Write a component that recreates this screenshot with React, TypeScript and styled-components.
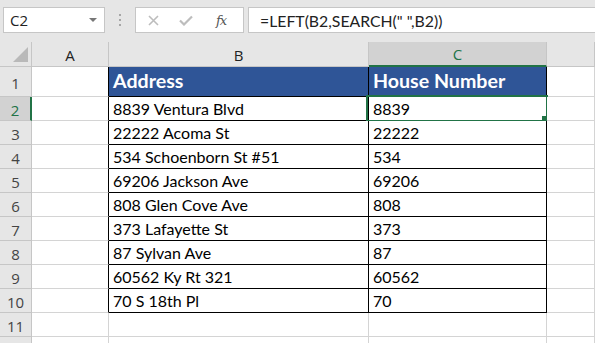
import styled, { createGlobalStyle } from "styled-components";

const GREEN = "#217346";
const GRID = "#d4d4d4";
const HEAD_LINE = "#c6c6c6";

const COLS = ["A", "B", "C", ""];
const COL_WIDTHS = "32px 77px 260px 178px 1fr";
const ROW_HEIGHTS = [30, 24, 24, 24, 24, 24, 24, 24, 24, 24, 24, 24];

const ROWS: [string, string][] = [
    ["Address", "House Number"],
    ["8839 Ventura Blvd", "8839"],
    ["22222 Acoma St", "22222"],
    ["534 Schoenborn St #51", "534"],
    ["69206 Jackson Ave", "69206"],
    ["808 Glen Cove Ave", "808"],
    ["373 Lafayette St", "373"],
    ["87 Sylvan Ave", "87"],
    ["60562 Ky Rt 321", "60562"],
    ["70 S 18th Pl", "70"],
    ["", ""],
    ["", ""],
];

const GlobalStyle = createGlobalStyle`
    html, body {
        margin: 0;
        padding: 0;
        background: #ffffff;
    }
`;

const Window = styled.div`
    width: 595px;
    height: 343px;
    overflow: hidden;
    background: #ffffff;
    font-family: "Open Sans", "Noto Sans", sans-serif;
`;

const Toolbar = styled.div`
    height: 42px;
    background: #e6e6e6;
    display: flex;
    align-items: flex-start;
    padding-top: 7px;
    box-sizing: border-box;
`;

const NameBox = styled.div`
    margin-left: 3px;
    width: 102px;
    height: 26px;
    box-sizing: border-box;
    background: #fff;
    border: 1px solid #c6c6c6;
    display: flex;
    align-items: center;
    justify-content: space-between;
    padding: 0 7px 0 6px;
    font-size: 15px;
    color: #222;
`;

const DropArrow = styled.div`
    width: 0;
    height: 0;
    border-left: 4px solid transparent;
    border-right: 4px solid transparent;
    border-top: 4px solid #777;
`;

const Grip = styled.div`
    width: 30px;
    height: 26px;
    display: flex;
    flex-direction: column;
    align-items: center;
    justify-content: center;
    gap: 3px;
`;

const GripDot = styled.span`
    width: 2px;
    height: 2px;
    background: #a6a6a6;
`;

const ButtonBox = styled.div`
    width: 109px;
    height: 26px;
    box-sizing: border-box;
    background: #fff;
    border: 1px solid #c6c6c6;
    display: flex;
    align-items: center;
    padding-left: 12px;
    gap: 20px;
`;

const FxLabel = styled.span`
    font-family: "DejaVu Serif", "Liberation Serif", serif;
    font-style: italic;
    font-size: 13px;
    color: #555;
    margin-left: 3px;
    letter-spacing: -1px;
`;

const FormulaBox = styled.div`
    margin-left: 4px;
    flex: 1;
    height: 26px;
    box-sizing: border-box;
    background: #fff;
    border: 1px solid #c6c6c6;
    border-right: none;
    display: flex;
    align-items: center;
    padding-left: 11px;
    font-family: Lato, "Open Sans", sans-serif;
    font-size: 15.8px;
    color: #222;
    white-space: pre;
`;

const Sheet = styled.div`
    display: grid;
    grid-template-columns: ${COL_WIDTHS};
    grid-template-rows: 25px ${ROW_HEIGHTS.map((h) => `${h}px`).join(" ")};
    background: #e6e6e6;
`;

const Corner = styled.div`
    position: relative;
    border-right: 1px solid ${HEAD_LINE};
    border-bottom: 1px solid ${HEAD_LINE};
`;

const ColHead = styled.div<{ $selected?: boolean }>`
    display: flex;
    align-items: center;
    justify-content: center;
    font-size: 15px;
    color: ${(p) => (p.$selected ? GREEN : "#222")};
    background: ${(p) => (p.$selected ? "#d2d2d2" : "#e6e6e6")};
    border-right: 1px solid ${HEAD_LINE};
    border-bottom: ${(p) => (p.$selected ? `2px solid ${GREEN}` : `1px solid ${HEAD_LINE}`)};
    padding-top: 1px;
`;

const RowHead = styled.div<{ $selected?: boolean }>`
    display: flex;
    align-items: center;
    justify-content: center;
    font-size: 15px;
    color: ${(p) => (p.$selected ? GREEN : "#444")};
    background: ${(p) => (p.$selected ? "#d2d2d2" : "#e6e6e6")};
    border-right: ${(p) => (p.$selected ? `2px solid ${GREEN}` : `1px solid ${HEAD_LINE}`)};
    border-bottom: 1px solid ${HEAD_LINE};
    padding-top: 2px;
`;

const Cell = styled.div<{ $right: string; $bottom: string; $header?: boolean }>`
    position: relative;
    display: flex;
    align-items: flex-end;
    padding: 0 0 ${(p) => (p.$header ? "5px" : "3px")} 4px;
    box-sizing: border-box;
    background: ${(p) => (p.$header ? "#2f5597" : "#ffffff")};
    color: ${(p) => (p.$header ? "#ffffff" : "#000000")};
    font-family: Lato, "Open Sans", sans-serif;
    font-size: ${(p) => (p.$header ? "19.6px" : "16px")};
    font-weight: ${(p) => (p.$header ? 700 : 400)};
    line-height: 1;
    white-space: nowrap;
    border-right: 1px solid ${(p) => p.$right};
    border-bottom: 1px solid ${(p) => p.$bottom};
`;

const Selection = styled.div`
    position: absolute;
    top: -2px;
    left: -3px;
    right: -2px;
    bottom: -2px;
    border: 2px solid ${GREEN};
    pointer-events: none;
`;

const Handle = styled.div`
    position: absolute;
    right: -2px;
    bottom: -2px;
    width: 6px;
    height: 6px;
    background: ${GREEN};
`;

const CancelIcon = () => (
    <svg width="11" height="11" viewBox="0 0 11 11">
        <path d="M1 1 L10 10 M10 1 L1 10" stroke="#bdbdbd" strokeWidth="1.6" fill="none" />
    </svg>
);

const EnterIcon = () => (
    <svg width="14" height="11" viewBox="0 0 14 11">
        <path d="M1 5.5 L5 9.5 L13 1.5" stroke="#bdbdbd" strokeWidth="2.2" fill="none" />
    </svg>
);

const CornerTriangle = () => (
    <svg width="32" height="25" viewBox="0 0 32 25" style={{ position: "absolute", top: 0, left: 0 }}>
        <polygon points="28,5 28,20 13,20" fill="#b9b9b9" />
    </svg>
);

// border colour of a cell in the bordered table range (B1:C10)
const rightBorder = (row: number, col: number) => {
    if (row < 10 && (col === 0 || col === 1 || col === 2)) return "#000";
    return GRID;
};

const bottomBorder = (row: number, col: number) => {
    if ((col === 1 || col === 2) && row < 10) return "#000";
    return GRID;
};

const App = () => (
    <Window>
        <GlobalStyle />
        <Toolbar>
            <NameBox>
                <span>C2</span>
                <DropArrow />
            </NameBox>
            <Grip>
                <GripDot />
                <GripDot />
                <GripDot />
            </Grip>
            <ButtonBox>
                <CancelIcon />
                <EnterIcon />
                <FxLabel>fx</FxLabel>
            </ButtonBox>
            <FormulaBox>=LEFT(B2,SEARCH(" ",B2))</FormulaBox>
        </Toolbar>
        <Sheet>
            <Corner>
                <CornerTriangle />
            </Corner>
            {COLS.map((c, i) => (
                <ColHead key={i} $selected={c === "C"}>
                    {c}
                </ColHead>
            ))}
            {ROWS.map(([b, c], r) => [
                <RowHead key={`h${r}`} $selected={r === 1}>
                    {r < 11 ? r + 1 : ""}
                </RowHead>,
                <Cell key={`a${r}`} $right={rightBorder(r, 0)} $bottom={GRID} />,
                <Cell key={`b${r}`} $right={rightBorder(r, 1)} $bottom={bottomBorder(r, 1)} $header={r === 0}>
                    {b}
                </Cell>,
                <Cell key={`c${r}`} $right={rightBorder(r, 2)} $bottom={bottomBorder(r, 2)} $header={r === 0}>
                    {c}
                    {r === 1 && (
                        <Selection>
                            <Handle />
                        </Selection>
                    )}
                </Cell>,
                <Cell key={`d${r}`} $right={GRID} $bottom={GRID} />,
            ])}
        </Sheet>
    </Window>
);

export default App;
